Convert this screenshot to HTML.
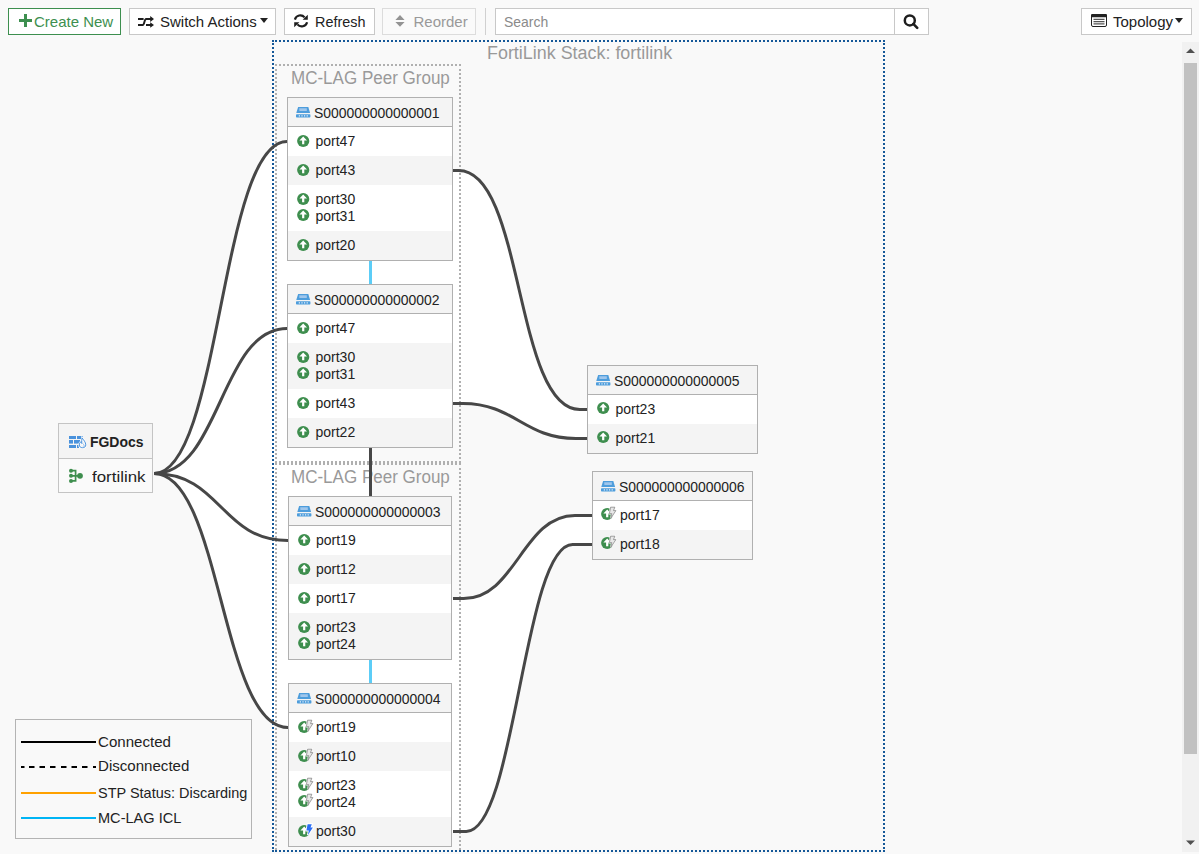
<!DOCTYPE html>
<html><head><meta charset="utf-8"><style>
html,body{margin:0;padding:0;}
body{width:1199px;height:854px;overflow:hidden;position:relative;background:#f9f9f9;font-family:"Liberation Sans", sans-serif;}
.t{position:absolute;white-space:nowrap;}
svg{display:block;}
</style></head><body>
<div style="position:absolute;left:8px;top:8px;width:113px;height:27px;box-sizing:border-box;border:1px solid #3d8f4f;background:#fff;"></div>
<svg style="position:absolute;left:18.5px;top:14px" width="14" height="13" viewBox="0 0 14 13"><path d="M5 0h3v5h5v3H8v5H5V8H0V5h5z" fill="#3d8f4f"/></svg>
<div class="t" style="left:34px;top:14.30px;font-size:15px;line-height:15px;color:#3d8f4f;font-weight:normal;">Create New</div>
<div style="position:absolute;left:129px;top:8px;width:147px;height:27px;box-sizing:border-box;border:1px solid #c8c8c8;background:#fff;"></div>
<svg style="position:absolute;left:137px;top:15px" width="18" height="14" viewBox="0 0 18 14"><g fill="none" stroke="#1e1e1e" stroke-width="2"><path d="M1,4H6.6"/><path d="M1,10H5.8C7.3,10 7.5,4 9,4H14"/><path d="M9,10H14"/></g><path d="M13.2,1L17,4L13.2,7z M13.2,7.3L17,10L13.2,12.8z" fill="#1e1e1e"/></svg>
<div class="t" style="left:160px;top:14.30px;font-size:15px;line-height:15px;color:#222;font-weight:normal;">Switch Actions</div>
<svg style="position:absolute;left:260px;top:18px" width="8" height="5" viewBox="0 0 8 5"><path d="M0 0h8L4 5z" fill="#222"/></svg>
<div style="position:absolute;left:284px;top:8px;width:91px;height:27px;box-sizing:border-box;border:1px solid #c8c8c8;background:#fff;"></div>
<svg style="position:absolute;left:293px;top:13px" width="16" height="16" viewBox="0 0 16 16"><g fill="none" stroke="#1e1e1e" stroke-width="2.2"><path d="M1.9,6.6A5.6,5.6 0 0 1 11.6,4.4"/><path d="M14.1,9.2A5.6,5.6 0 0 1 4.4,11.4"/></g><path d="M9.6,6.8H14.8V1.8z M6.4,9.2H1.2V14.2z" fill="#1e1e1e"/></svg>
<div class="t" style="left:315px;top:14.30px;font-size:15px;line-height:15px;color:#222;font-weight:normal;transform:scaleX(0.96);transform-origin:0 0;">Refresh</div>
<div style="position:absolute;left:382px;top:8px;width:94px;height:27px;box-sizing:border-box;border:1px solid #dcdcdc;background:#fafafa;"></div>
<svg style="position:absolute;left:395px;top:14px" width="10" height="14" viewBox="0 0 10 14"><path d="M5,1L9.6,5.9H0.4z M0.4,8H9.6L5,12.8z" fill="#939393"/></svg>
<div class="t" style="left:413.5px;top:14.30px;font-size:15px;line-height:15px;color:#999;font-weight:normal;">Reorder</div>
<div style="position:absolute;left:485px;top:8px;width:1px;height:27px;box-sizing:border-box;background:#d0d0d0;"></div>
<div style="position:absolute;left:495px;top:8px;width:400px;height:27px;box-sizing:border-box;border:1px solid #c8c8c8;background:#fff;"></div>
<div class="t" style="left:503.5px;top:14.30px;font-size:15px;line-height:15px;color:#8a8a8a;font-weight:normal;transform:scaleX(0.93);transform-origin:0 0;">Search</div>
<div style="position:absolute;left:894px;top:8px;width:35px;height:27px;box-sizing:border-box;border:1px solid #c8c8c8;background:#fff;"></div>
<svg style="position:absolute;left:903px;top:14px" width="16" height="16" viewBox="0 0 16 16"><circle cx="6.8" cy="6.4" r="5" fill="none" stroke="#1e1e1e" stroke-width="2.5"/><path d="M10.3,9.9L14.2,13.8" stroke="#1e1e1e" stroke-width="2.6" stroke-linecap="round"/></svg>
<div style="position:absolute;left:1081px;top:8px;width:111px;height:27px;box-sizing:border-box;border:1px solid #c8c8c8;background:#fff;"></div>
<svg style="position:absolute;left:1091px;top:14px" width="16" height="13" viewBox="0 0 16 13"><rect x="0.5" y="0.5" width="15" height="12" rx="1.5" fill="#fff" stroke="#222"/><rect x="0" y="0" width="16" height="3.2" rx="1.2" fill="#222"/><path d="M2.5 5.3h11M2.5 7.6h11M2.5 9.9h11" stroke="#555" stroke-width="1.3"/></svg>
<div class="t" style="left:1113px;top:14.30px;font-size:15px;line-height:15px;color:#222;font-weight:normal;">Topology</div>
<svg style="position:absolute;left:1175px;top:18px" width="8" height="5" viewBox="0 0 8 5"><path d="M0 0h8L4 5z" fill="#222"/></svg>
<div style="position:absolute;left:1182px;top:42px;width:17px;height:810px;box-sizing:border-box;background:#f1f1f1;"></div>
<div style="position:absolute;left:1184px;top:63px;width:13px;height:691px;box-sizing:border-box;background:#c1c1c1;"></div>
<svg style="position:absolute;left:1186px;top:48px" width="9" height="6" viewBox="0 0 9 6"><path d="M0 5h9L4.5 0.5z" fill="#505050"/></svg>
<svg style="position:absolute;left:1186px;top:840px" width="9" height="6" viewBox="0 0 9 6"><path d="M0 0.5h9L4.5 5z" fill="#505050"/></svg>
<svg style="position:absolute;left:0;top:0" width="1199" height="854"><path d="M154,473.5 C220.50,473.5 220.50,141.5 287,141.5 L370.5,141.5 L370.5,727.5 L288,727.5 C221.00,727.5 221.00,473.5 154,473.5 Z" fill="#fff"/><path d="M453,170.5 L458.6,170.5 C524.05,170.5 514.35,409.5 579.8,409.5 L587,409.5 L587,438.5 L575.9,438.5 C523.87,438.5 514.83,403.5 462.8,403.5 L453,403.5 L370.5,403.5 L370.5,170.5 Z" fill="#fff"/><path d="M453,598.5 L463.6,598.5 C515.96,598.5 522.64,515.5 575.0,515.5 L592,515.5 L592,544.5 L572.6,544.5 C523.70,544.5 515.20,831.5 466.3,831.5 L453,831.5 L370.5,831.5 L370.5,598.5 Z" fill="#fff"/></svg>
<div style="position:absolute;left:272px;top:40px;width:613px;height:812px;box-sizing:border-box;border:2px dotted #155898;"></div>
<div class="t" style="left:486.6px;top:43.56px;font-size:18px;line-height:18px;color:#999;font-weight:normal;transform:scaleX(0.995);transform-origin:0 0;">FortiLink Stack: fortilink</div>
<div style="position:absolute;left:275px;top:64px;width:186px;height:399px;box-sizing:border-box;border:2px dotted #b0b0b0;"></div>
<div class="t" style="left:291.4px;top:68.56px;font-size:18px;line-height:18px;color:#999;font-weight:normal;transform:scaleX(0.945);transform-origin:0 0;">MC-LAG Peer Group</div>
<div style="position:absolute;left:275px;top:463px;width:186px;height:387px;box-sizing:border-box;border:2px dotted #b0b0b0;border-bottom:none;"></div>
<div class="t" style="left:291.4px;top:467.56px;font-size:18px;line-height:18px;color:#999;font-weight:normal;transform:scaleX(0.945);transform-origin:0 0;">MC-LAG Peer Group</div>
<svg style="position:absolute;left:0;top:0" width="1199" height="854"><g fill="none" stroke="#474747" stroke-width="3"><path d="M154,473.5 C220.50,473.5 220.50,141.5 287,141.5"/><path d="M154,473.5 C220.50,473.5 220.50,328.5 287,328.5"/><path d="M154,473.5 C221.00,473.5 221.00,540.5 288,540.5"/><path d="M154,473.5 C221.00,473.5 221.00,727.5 288,727.5"/><path d="M453,170.5 L458.6,170.5 C524.05,170.5 514.35,409.5 579.8,409.5 L587,409.5"/><path d="M453,403.5 L462.8,403.5 C514.83,403.5 523.87,438.5 575.9,438.5 L587,438.5"/><path d="M453,598.5 L463.6,598.5 C515.96,598.5 522.64,515.5 575.0,515.5 L592,515.5"/><path d="M453,831.5 L466.3,831.5 C515.20,831.5 523.70,544.5 572.6,544.5 L592,544.5"/><path d="M370.5,447V497"/></g><g stroke="#5ccdf7" stroke-width="3"><path d="M370.5,260V284"/><path d="M370.5,659V683"/></g></svg>
<div style="position:absolute;left:287px;top:97px;width:166px;height:164px;box-sizing:border-box;border:1px solid #b0b0b0;background:#fff;"></div>
<div style="position:absolute;left:288px;top:98px;width:164px;height:28px;box-sizing:border-box;background:#f4f4f4;border-bottom:1px solid #b0b0b0;box-sizing:content-box;"></div>
<svg style="position:absolute;left:296px;top:107px" width="15" height="12" viewBox="0 0 15 12"><path d="M2.1 0.1h10.2l1.8 5.9H0.3z" fill="#4d9ddc"/><path d="M3.2 1.3h7.6v2.8H3.4z" fill="#9fc6ec"/><rect x="0" y="7.2" width="14.4" height="3.3" rx="0.7" fill="#4d9ddc"/><path d="M2.8 8.9h1.2M5.4 8.9h1.2M8.0 8.9h1.2M10.6 8.9h1.2" stroke="#e6f0fa" stroke-width="1.1"/></svg>
<div class="t" style="left:314.2px;top:106.35px;font-size:14px;line-height:14px;color:#222;font-weight:normal;transform:scaleX(0.995);transform-origin:0 0;">S000000000000001</div>
<svg style="position:absolute;left:297px;top:134px;overflow:visible" width="16" height="14" viewBox="0 0 16 14"><circle cx="6.2" cy="7" r="6.1" fill="#3e8e4e"/><path d="M6.2 2.6L10 6.4H7.3V10.2H5.1V6.4H2.4z" fill="#fff"/></svg>
<div class="t" style="left:315.5px;top:134.15px;font-size:14px;line-height:14px;color:#222;font-weight:normal;">port47</div>
<div style="position:absolute;left:288px;top:156px;width:164px;height:29px;box-sizing:border-box;background:#f4f4f4;"></div>
<svg style="position:absolute;left:297px;top:163px;overflow:visible" width="16" height="14" viewBox="0 0 16 14"><circle cx="6.2" cy="7" r="6.1" fill="#3e8e4e"/><path d="M6.2 2.6L10 6.4H7.3V10.2H5.1V6.4H2.4z" fill="#fff"/></svg>
<div class="t" style="left:315.5px;top:163.15px;font-size:14px;line-height:14px;color:#222;font-weight:normal;">port43</div>
<svg style="position:absolute;left:297px;top:192px;overflow:visible" width="16" height="14" viewBox="0 0 16 14"><circle cx="6.2" cy="7" r="6.1" fill="#3e8e4e"/><path d="M6.2 2.6L10 6.4H7.3V10.2H5.1V6.4H2.4z" fill="#fff"/></svg>
<div class="t" style="left:315.5px;top:191.85px;font-size:14px;line-height:14px;color:#222;font-weight:normal;">port30</div>
<svg style="position:absolute;left:297px;top:208px;overflow:visible" width="16" height="14" viewBox="0 0 16 14"><circle cx="6.2" cy="7" r="6.1" fill="#3e8e4e"/><path d="M6.2 2.6L10 6.4H7.3V10.2H5.1V6.4H2.4z" fill="#fff"/></svg>
<div class="t" style="left:315.5px;top:208.85px;font-size:14px;line-height:14px;color:#222;font-weight:normal;">port31</div>
<div style="position:absolute;left:288px;top:231px;width:164px;height:29px;box-sizing:border-box;background:#f4f4f4;"></div>
<svg style="position:absolute;left:297px;top:238px;overflow:visible" width="16" height="14" viewBox="0 0 16 14"><circle cx="6.2" cy="7" r="6.1" fill="#3e8e4e"/><path d="M6.2 2.6L10 6.4H7.3V10.2H5.1V6.4H2.4z" fill="#fff"/></svg>
<div class="t" style="left:315.5px;top:238.15px;font-size:14px;line-height:14px;color:#222;font-weight:normal;">port20</div>
<div style="position:absolute;left:287px;top:284px;width:166px;height:164px;box-sizing:border-box;border:1px solid #b0b0b0;background:#fff;"></div>
<div style="position:absolute;left:288px;top:285px;width:164px;height:28px;box-sizing:border-box;background:#f4f4f4;border-bottom:1px solid #b0b0b0;box-sizing:content-box;"></div>
<svg style="position:absolute;left:296px;top:294px" width="15" height="12" viewBox="0 0 15 12"><path d="M2.1 0.1h10.2l1.8 5.9H0.3z" fill="#4d9ddc"/><path d="M3.2 1.3h7.6v2.8H3.4z" fill="#9fc6ec"/><rect x="0" y="7.2" width="14.4" height="3.3" rx="0.7" fill="#4d9ddc"/><path d="M2.8 8.9h1.2M5.4 8.9h1.2M8.0 8.9h1.2M10.6 8.9h1.2" stroke="#e6f0fa" stroke-width="1.1"/></svg>
<div class="t" style="left:314.2px;top:293.35px;font-size:14px;line-height:14px;color:#222;font-weight:normal;transform:scaleX(0.995);transform-origin:0 0;">S000000000000002</div>
<svg style="position:absolute;left:297px;top:321px;overflow:visible" width="16" height="14" viewBox="0 0 16 14"><circle cx="6.2" cy="7" r="6.1" fill="#3e8e4e"/><path d="M6.2 2.6L10 6.4H7.3V10.2H5.1V6.4H2.4z" fill="#fff"/></svg>
<div class="t" style="left:315.5px;top:321.15px;font-size:14px;line-height:14px;color:#222;font-weight:normal;">port47</div>
<div style="position:absolute;left:288px;top:343px;width:164px;height:46px;box-sizing:border-box;background:#f4f4f4;"></div>
<svg style="position:absolute;left:297px;top:350px;overflow:visible" width="16" height="14" viewBox="0 0 16 14"><circle cx="6.2" cy="7" r="6.1" fill="#3e8e4e"/><path d="M6.2 2.6L10 6.4H7.3V10.2H5.1V6.4H2.4z" fill="#fff"/></svg>
<div class="t" style="left:315.5px;top:349.85px;font-size:14px;line-height:14px;color:#222;font-weight:normal;">port30</div>
<svg style="position:absolute;left:297px;top:366px;overflow:visible" width="16" height="14" viewBox="0 0 16 14"><circle cx="6.2" cy="7" r="6.1" fill="#3e8e4e"/><path d="M6.2 2.6L10 6.4H7.3V10.2H5.1V6.4H2.4z" fill="#fff"/></svg>
<div class="t" style="left:315.5px;top:366.85px;font-size:14px;line-height:14px;color:#222;font-weight:normal;">port31</div>
<svg style="position:absolute;left:297px;top:396px;overflow:visible" width="16" height="14" viewBox="0 0 16 14"><circle cx="6.2" cy="7" r="6.1" fill="#3e8e4e"/><path d="M6.2 2.6L10 6.4H7.3V10.2H5.1V6.4H2.4z" fill="#fff"/></svg>
<div class="t" style="left:315.5px;top:396.15px;font-size:14px;line-height:14px;color:#222;font-weight:normal;">port43</div>
<div style="position:absolute;left:288px;top:418px;width:164px;height:29px;box-sizing:border-box;background:#f4f4f4;"></div>
<svg style="position:absolute;left:297px;top:425px;overflow:visible" width="16" height="14" viewBox="0 0 16 14"><circle cx="6.2" cy="7" r="6.1" fill="#3e8e4e"/><path d="M6.2 2.6L10 6.4H7.3V10.2H5.1V6.4H2.4z" fill="#fff"/></svg>
<div class="t" style="left:315.5px;top:425.15px;font-size:14px;line-height:14px;color:#222;font-weight:normal;">port22</div>
<div style="position:absolute;left:288px;top:496px;width:164px;height:164px;box-sizing:border-box;border:1px solid #b0b0b0;background:#fff;"></div>
<div style="position:absolute;left:289px;top:497px;width:162px;height:28px;box-sizing:border-box;background:#f4f4f4;border-bottom:1px solid #b0b0b0;box-sizing:content-box;"></div>
<svg style="position:absolute;left:296.5px;top:506px" width="15" height="12" viewBox="0 0 15 12"><path d="M2.1 0.1h10.2l1.8 5.9H0.3z" fill="#4d9ddc"/><path d="M3.2 1.3h7.6v2.8H3.4z" fill="#9fc6ec"/><rect x="0" y="7.2" width="14.4" height="3.3" rx="0.7" fill="#4d9ddc"/><path d="M2.8 8.9h1.2M5.4 8.9h1.2M8.0 8.9h1.2M10.6 8.9h1.2" stroke="#e6f0fa" stroke-width="1.1"/></svg>
<div class="t" style="left:314.7px;top:505.35px;font-size:14px;line-height:14px;color:#222;font-weight:normal;transform:scaleX(0.995);transform-origin:0 0;">S000000000000003</div>
<svg style="position:absolute;left:297.5px;top:533px;overflow:visible" width="16" height="14" viewBox="0 0 16 14"><circle cx="6.2" cy="7" r="6.1" fill="#3e8e4e"/><path d="M6.2 2.6L10 6.4H7.3V10.2H5.1V6.4H2.4z" fill="#fff"/></svg>
<div class="t" style="left:316.0px;top:533.15px;font-size:14px;line-height:14px;color:#222;font-weight:normal;">port19</div>
<div style="position:absolute;left:289px;top:555px;width:162px;height:29px;box-sizing:border-box;background:#f4f4f4;"></div>
<svg style="position:absolute;left:297.5px;top:562px;overflow:visible" width="16" height="14" viewBox="0 0 16 14"><circle cx="6.2" cy="7" r="6.1" fill="#3e8e4e"/><path d="M6.2 2.6L10 6.4H7.3V10.2H5.1V6.4H2.4z" fill="#fff"/></svg>
<div class="t" style="left:316.0px;top:562.15px;font-size:14px;line-height:14px;color:#222;font-weight:normal;">port12</div>
<svg style="position:absolute;left:297.5px;top:591px;overflow:visible" width="16" height="14" viewBox="0 0 16 14"><circle cx="6.2" cy="7" r="6.1" fill="#3e8e4e"/><path d="M6.2 2.6L10 6.4H7.3V10.2H5.1V6.4H2.4z" fill="#fff"/></svg>
<div class="t" style="left:316.0px;top:591.15px;font-size:14px;line-height:14px;color:#222;font-weight:normal;">port17</div>
<div style="position:absolute;left:289px;top:613px;width:162px;height:46px;box-sizing:border-box;background:#f4f4f4;"></div>
<svg style="position:absolute;left:297.5px;top:620px;overflow:visible" width="16" height="14" viewBox="0 0 16 14"><circle cx="6.2" cy="7" r="6.1" fill="#3e8e4e"/><path d="M6.2 2.6L10 6.4H7.3V10.2H5.1V6.4H2.4z" fill="#fff"/></svg>
<div class="t" style="left:316.0px;top:619.85px;font-size:14px;line-height:14px;color:#222;font-weight:normal;">port23</div>
<svg style="position:absolute;left:297.5px;top:636px;overflow:visible" width="16" height="14" viewBox="0 0 16 14"><circle cx="6.2" cy="7" r="6.1" fill="#3e8e4e"/><path d="M6.2 2.6L10 6.4H7.3V10.2H5.1V6.4H2.4z" fill="#fff"/></svg>
<div class="t" style="left:316.0px;top:636.85px;font-size:14px;line-height:14px;color:#222;font-weight:normal;">port24</div>
<div style="position:absolute;left:288px;top:683px;width:164px;height:164px;box-sizing:border-box;border:1px solid #b0b0b0;background:#fff;"></div>
<div style="position:absolute;left:289px;top:684px;width:162px;height:28px;box-sizing:border-box;background:#f4f4f4;border-bottom:1px solid #b0b0b0;box-sizing:content-box;"></div>
<svg style="position:absolute;left:296.5px;top:693px" width="15" height="12" viewBox="0 0 15 12"><path d="M2.1 0.1h10.2l1.8 5.9H0.3z" fill="#4d9ddc"/><path d="M3.2 1.3h7.6v2.8H3.4z" fill="#9fc6ec"/><rect x="0" y="7.2" width="14.4" height="3.3" rx="0.7" fill="#4d9ddc"/><path d="M2.8 8.9h1.2M5.4 8.9h1.2M8.0 8.9h1.2M10.6 8.9h1.2" stroke="#e6f0fa" stroke-width="1.1"/></svg>
<div class="t" style="left:314.7px;top:692.35px;font-size:14px;line-height:14px;color:#222;font-weight:normal;transform:scaleX(0.995);transform-origin:0 0;">S000000000000004</div>
<svg style="position:absolute;left:297.5px;top:720px;overflow:visible" width="16" height="14" viewBox="0 0 16 14"><circle cx="6.2" cy="7" r="6.1" fill="#3e8e4e"/><path d="M6.2 2.6L10 6.4H7.3V10.2H5.1V6.4H2.4z" fill="#fff"/><path d="M9.6,0.2 L13.8,0.2 L12.5,3.6 L14.9,3.6 L9.8,11.3 L10.8,6.6 L8.4,6.6 Z" fill="#fff" stroke="#fff" stroke-width="1.6"/><path d="M9.6,0.2 L13.8,0.2 L12.5,3.6 L14.9,3.6 L9.8,11.3 L10.8,6.6 L8.4,6.6 Z" fill="#e8e8e8" stroke="#7a7a7a" stroke-width="0.7"/></svg>
<div class="t" style="left:316.0px;top:720.15px;font-size:14px;line-height:14px;color:#222;font-weight:normal;">port19</div>
<div style="position:absolute;left:289px;top:742px;width:162px;height:29px;box-sizing:border-box;background:#f4f4f4;"></div>
<svg style="position:absolute;left:297.5px;top:749px;overflow:visible" width="16" height="14" viewBox="0 0 16 14"><circle cx="6.2" cy="7" r="6.1" fill="#3e8e4e"/><path d="M6.2 2.6L10 6.4H7.3V10.2H5.1V6.4H2.4z" fill="#fff"/><path d="M9.6,0.2 L13.8,0.2 L12.5,3.6 L14.9,3.6 L9.8,11.3 L10.8,6.6 L8.4,6.6 Z" fill="#fff" stroke="#fff" stroke-width="1.6"/><path d="M9.6,0.2 L13.8,0.2 L12.5,3.6 L14.9,3.6 L9.8,11.3 L10.8,6.6 L8.4,6.6 Z" fill="#e8e8e8" stroke="#7a7a7a" stroke-width="0.7"/></svg>
<div class="t" style="left:316.0px;top:749.15px;font-size:14px;line-height:14px;color:#222;font-weight:normal;">port10</div>
<svg style="position:absolute;left:297.5px;top:778px;overflow:visible" width="16" height="14" viewBox="0 0 16 14"><circle cx="6.2" cy="7" r="6.1" fill="#3e8e4e"/><path d="M6.2 2.6L10 6.4H7.3V10.2H5.1V6.4H2.4z" fill="#fff"/><path d="M9.6,0.2 L13.8,0.2 L12.5,3.6 L14.9,3.6 L9.8,11.3 L10.8,6.6 L8.4,6.6 Z" fill="#fff" stroke="#fff" stroke-width="1.6"/><path d="M9.6,0.2 L13.8,0.2 L12.5,3.6 L14.9,3.6 L9.8,11.3 L10.8,6.6 L8.4,6.6 Z" fill="#e8e8e8" stroke="#7a7a7a" stroke-width="0.7"/></svg>
<div class="t" style="left:316.0px;top:777.85px;font-size:14px;line-height:14px;color:#222;font-weight:normal;">port23</div>
<svg style="position:absolute;left:297.5px;top:794px;overflow:visible" width="16" height="14" viewBox="0 0 16 14"><circle cx="6.2" cy="7" r="6.1" fill="#3e8e4e"/><path d="M6.2 2.6L10 6.4H7.3V10.2H5.1V6.4H2.4z" fill="#fff"/><path d="M9.6,0.2 L13.8,0.2 L12.5,3.6 L14.9,3.6 L9.8,11.3 L10.8,6.6 L8.4,6.6 Z" fill="#fff" stroke="#fff" stroke-width="1.6"/><path d="M9.6,0.2 L13.8,0.2 L12.5,3.6 L14.9,3.6 L9.8,11.3 L10.8,6.6 L8.4,6.6 Z" fill="#e8e8e8" stroke="#7a7a7a" stroke-width="0.7"/></svg>
<div class="t" style="left:316.0px;top:794.85px;font-size:14px;line-height:14px;color:#222;font-weight:normal;">port24</div>
<div style="position:absolute;left:289px;top:817px;width:162px;height:29px;box-sizing:border-box;background:#f4f4f4;"></div>
<svg style="position:absolute;left:297.5px;top:824px;overflow:visible" width="16" height="14" viewBox="0 0 16 14"><circle cx="6.2" cy="7" r="6.1" fill="#3e8e4e"/><path d="M6.2 2.6L10 6.4H7.3V10.2H5.1V6.4H2.4z" fill="#fff"/><path d="M9.6,0.2 L13.8,0.2 L12.5,3.6 L14.9,3.6 L9.8,11.3 L10.8,6.6 L8.4,6.6 Z" fill="#fff" stroke="#fff" stroke-width="1.8"/><path d="M9.6,0.2 L13.8,0.2 L12.5,3.6 L14.9,3.6 L9.8,11.3 L10.8,6.6 L8.4,6.6 Z" fill="#2a6df4"/></svg>
<div class="t" style="left:316.0px;top:824.15px;font-size:14px;line-height:14px;color:#222;font-weight:normal;">port30</div>
<div style="position:absolute;left:587px;top:365px;width:171px;height:89px;box-sizing:border-box;border:1px solid #b0b0b0;background:#fff;"></div>
<div style="position:absolute;left:588px;top:366px;width:169px;height:28px;box-sizing:border-box;background:#f4f4f4;border-bottom:1px solid #b0b0b0;box-sizing:content-box;"></div>
<svg style="position:absolute;left:596px;top:375px" width="15" height="12" viewBox="0 0 15 12"><path d="M2.1 0.1h10.2l1.8 5.9H0.3z" fill="#4d9ddc"/><path d="M3.2 1.3h7.6v2.8H3.4z" fill="#9fc6ec"/><rect x="0" y="7.2" width="14.4" height="3.3" rx="0.7" fill="#4d9ddc"/><path d="M2.8 8.9h1.2M5.4 8.9h1.2M8.0 8.9h1.2M10.6 8.9h1.2" stroke="#e6f0fa" stroke-width="1.1"/></svg>
<div class="t" style="left:614.2px;top:374.35px;font-size:14px;line-height:14px;color:#222;font-weight:normal;transform:scaleX(0.995);transform-origin:0 0;">S000000000000005</div>
<svg style="position:absolute;left:596.5px;top:401px;overflow:visible" width="16" height="14" viewBox="0 0 16 14"><circle cx="6.2" cy="7" r="6.1" fill="#3e8e4e"/><path d="M6.2 2.6L10 6.4H7.3V10.2H5.1V6.4H2.4z" fill="#fff"/></svg>
<div class="t" style="left:615.5px;top:402.15px;font-size:14px;line-height:14px;color:#222;font-weight:normal;">port23</div>
<div style="position:absolute;left:588px;top:424px;width:169px;height:29px;box-sizing:border-box;background:#f4f4f4;"></div>
<svg style="position:absolute;left:596.5px;top:430px;overflow:visible" width="16" height="14" viewBox="0 0 16 14"><circle cx="6.2" cy="7" r="6.1" fill="#3e8e4e"/><path d="M6.2 2.6L10 6.4H7.3V10.2H5.1V6.4H2.4z" fill="#fff"/></svg>
<div class="t" style="left:615.5px;top:431.15px;font-size:14px;line-height:14px;color:#222;font-weight:normal;">port21</div>
<div style="position:absolute;left:592px;top:471px;width:161px;height:89px;box-sizing:border-box;border:1px solid #b0b0b0;background:#fff;"></div>
<div style="position:absolute;left:593px;top:472px;width:159px;height:28px;box-sizing:border-box;background:#f4f4f4;border-bottom:1px solid #b0b0b0;box-sizing:content-box;"></div>
<svg style="position:absolute;left:600.5px;top:481px" width="15" height="12" viewBox="0 0 15 12"><path d="M2.1 0.1h10.2l1.8 5.9H0.3z" fill="#4d9ddc"/><path d="M3.2 1.3h7.6v2.8H3.4z" fill="#9fc6ec"/><rect x="0" y="7.2" width="14.4" height="3.3" rx="0.7" fill="#4d9ddc"/><path d="M2.8 8.9h1.2M5.4 8.9h1.2M8.0 8.9h1.2M10.6 8.9h1.2" stroke="#e6f0fa" stroke-width="1.1"/></svg>
<div class="t" style="left:618.7px;top:480.35px;font-size:14px;line-height:14px;color:#222;font-weight:normal;transform:scaleX(0.995);transform-origin:0 0;">S000000000000006</div>
<svg style="position:absolute;left:600.5px;top:507px;overflow:visible" width="16" height="14" viewBox="0 0 16 14"><circle cx="6.2" cy="7" r="6.1" fill="#3e8e4e"/><path d="M6.2 2.6L10 6.4H7.3V10.2H5.1V6.4H2.4z" fill="#fff"/><path d="M9.6,0.2 L13.8,0.2 L12.5,3.6 L14.9,3.6 L9.8,11.3 L10.8,6.6 L8.4,6.6 Z" fill="#fff" stroke="#fff" stroke-width="1.6"/><path d="M9.6,0.2 L13.8,0.2 L12.5,3.6 L14.9,3.6 L9.8,11.3 L10.8,6.6 L8.4,6.6 Z" fill="#e8e8e8" stroke="#7a7a7a" stroke-width="0.7"/></svg>
<div class="t" style="left:620.0px;top:508.15px;font-size:14px;line-height:14px;color:#222;font-weight:normal;">port17</div>
<div style="position:absolute;left:593px;top:530px;width:159px;height:29px;box-sizing:border-box;background:#f4f4f4;"></div>
<svg style="position:absolute;left:600.5px;top:536px;overflow:visible" width="16" height="14" viewBox="0 0 16 14"><circle cx="6.2" cy="7" r="6.1" fill="#3e8e4e"/><path d="M6.2 2.6L10 6.4H7.3V10.2H5.1V6.4H2.4z" fill="#fff"/><path d="M9.6,0.2 L13.8,0.2 L12.5,3.6 L14.9,3.6 L9.8,11.3 L10.8,6.6 L8.4,6.6 Z" fill="#fff" stroke="#fff" stroke-width="1.6"/><path d="M9.6,0.2 L13.8,0.2 L12.5,3.6 L14.9,3.6 L9.8,11.3 L10.8,6.6 L8.4,6.6 Z" fill="#e8e8e8" stroke="#7a7a7a" stroke-width="0.7"/></svg>
<div class="t" style="left:620.0px;top:537.15px;font-size:14px;line-height:14px;color:#222;font-weight:normal;">port18</div>
<div style="position:absolute;left:58px;top:423px;width:95px;height:70px;box-sizing:border-box;border:1px solid #c4c4c4;background:#fafafa;"></div>
<div style="position:absolute;left:59px;top:424px;width:93px;height:34px;box-sizing:border-box;background:#f4f4f4;border-bottom:1px solid #c4c4c4;box-sizing:content-box;"></div>
<svg style="position:absolute;left:69px;top:435px" width="18" height="14" viewBox="0 0 18 14"><g fill="#4a92dc"><rect x="0" y="1" width="7" height="3"/><rect x="8" y="1" width="6" height="3"/><rect x="0" y="5" width="4" height="3.6"/><rect x="5" y="5" width="6" height="3.6"/><rect x="0" y="10" width="7" height="3"/><rect x="8" y="10" width="2" height="3"/></g><path d="M13.1,2.9C14.6,5 16.8,7.2 16.8,9.9C16.8,11.7 15.5,12.7 13.5,12.7C11.5,12.7 10.3,11.6 10.3,9.9C10.3,8.5 11,7.5 11.8,6.7C12,7.7 12.3,8.2 12.8,8.5C12.5,6.5 12.7,4.5 13.1,2.9Z" fill="#f4f4f4" stroke="#fff" stroke-width="2"/><path d="M13.1,2.9C14.6,5 16.8,7.2 16.8,9.9C16.8,11.7 15.5,12.7 13.5,12.7C11.5,12.7 10.3,11.6 10.3,9.9C10.3,8.5 11,7.5 11.8,6.7C12,7.7 12.3,8.2 12.8,8.5C12.5,6.5 12.7,4.5 13.1,2.9Z" fill="none" stroke="#4a92dc" stroke-width="1"/><path d="M13.6,8.4C14.6,9.4 15.2,10.2 15.2,11C15.2,11.8 14.5,12.2 13.6,12.2" fill="none" stroke="#8ab8ea" stroke-width="0.9"/></svg>
<div class="t" style="left:90.3px;top:433.88px;font-size:15.5px;line-height:15.5px;color:#222;font-weight:bold;transform:scaleX(0.9);transform-origin:0 0;">FGDocs</div>
<svg style="position:absolute;left:68px;top:468px" width="16" height="16" viewBox="0 0 16 16"><g fill="#3e8e4e"><circle cx="3" cy="2.7" r="2"/><circle cx="3" cy="7.8" r="2"/><circle cx="3" cy="12.9" r="2"/><circle cx="12" cy="7.8" r="2.9"/></g><path d="M3 2.7h4.6v10.2H3M3 7.8h9" fill="none" stroke="#3e8e4e" stroke-width="1.7"/></svg>
<div class="t" style="left:91.8px;top:468.90px;font-size:15px;line-height:15px;color:#222;font-weight:normal;transform:scaleX(1.125);transform-origin:0 0;">fortilink</div>
<div style="position:absolute;left:15px;top:719px;width:237px;height:120px;box-sizing:border-box;border:1px solid #b4b4b4;background:#f9f9f9;"></div>
<svg style="position:absolute;left:0;top:700px" width="120" height="140" viewBox="0 700 120 140"><rect x="21" y="741" width="75" height="2" fill="#000"/><rect x="21" y="766" width="3.5" height="2" fill="#000"/><rect x="29" y="766" width="5.5" height="2" fill="#000"/><rect x="39.5" y="766" width="5.5" height="2" fill="#000"/><rect x="50" y="766" width="5.5" height="2" fill="#000"/><rect x="61" y="766" width="5.5" height="2" fill="#000"/><rect x="71.5" y="766" width="5.5" height="2" fill="#000"/><rect x="82" y="766" width="5.5" height="2" fill="#000"/><rect x="93" y="766" width="3" height="2" fill="#000"/><rect x="21" y="792" width="75" height="2" fill="#ffa100"/><rect x="21" y="817" width="75" height="2" fill="#00b5f5"/></svg>
<div class="t" style="left:98.3px;top:734.00px;font-size:15px;line-height:15px;color:#222;font-weight:normal;transform:scaleX(1.005);transform-origin:0 0;">Connected</div>
<div class="t" style="left:98.3px;top:758.40px;font-size:15px;line-height:15px;color:#222;font-weight:normal;transform:scaleX(1.005);transform-origin:0 0;">Disconnected</div>
<div class="t" style="left:98.3px;top:785.30px;font-size:15px;line-height:15px;color:#222;font-weight:normal;transform:scaleX(0.965);transform-origin:0 0;">STP Status: Discarding</div>
<div class="t" style="left:98.3px;top:809.70px;font-size:15px;line-height:15px;color:#222;font-weight:normal;transform:scaleX(0.97);transform-origin:0 0;">MC-LAG ICL</div>
</body></html>
